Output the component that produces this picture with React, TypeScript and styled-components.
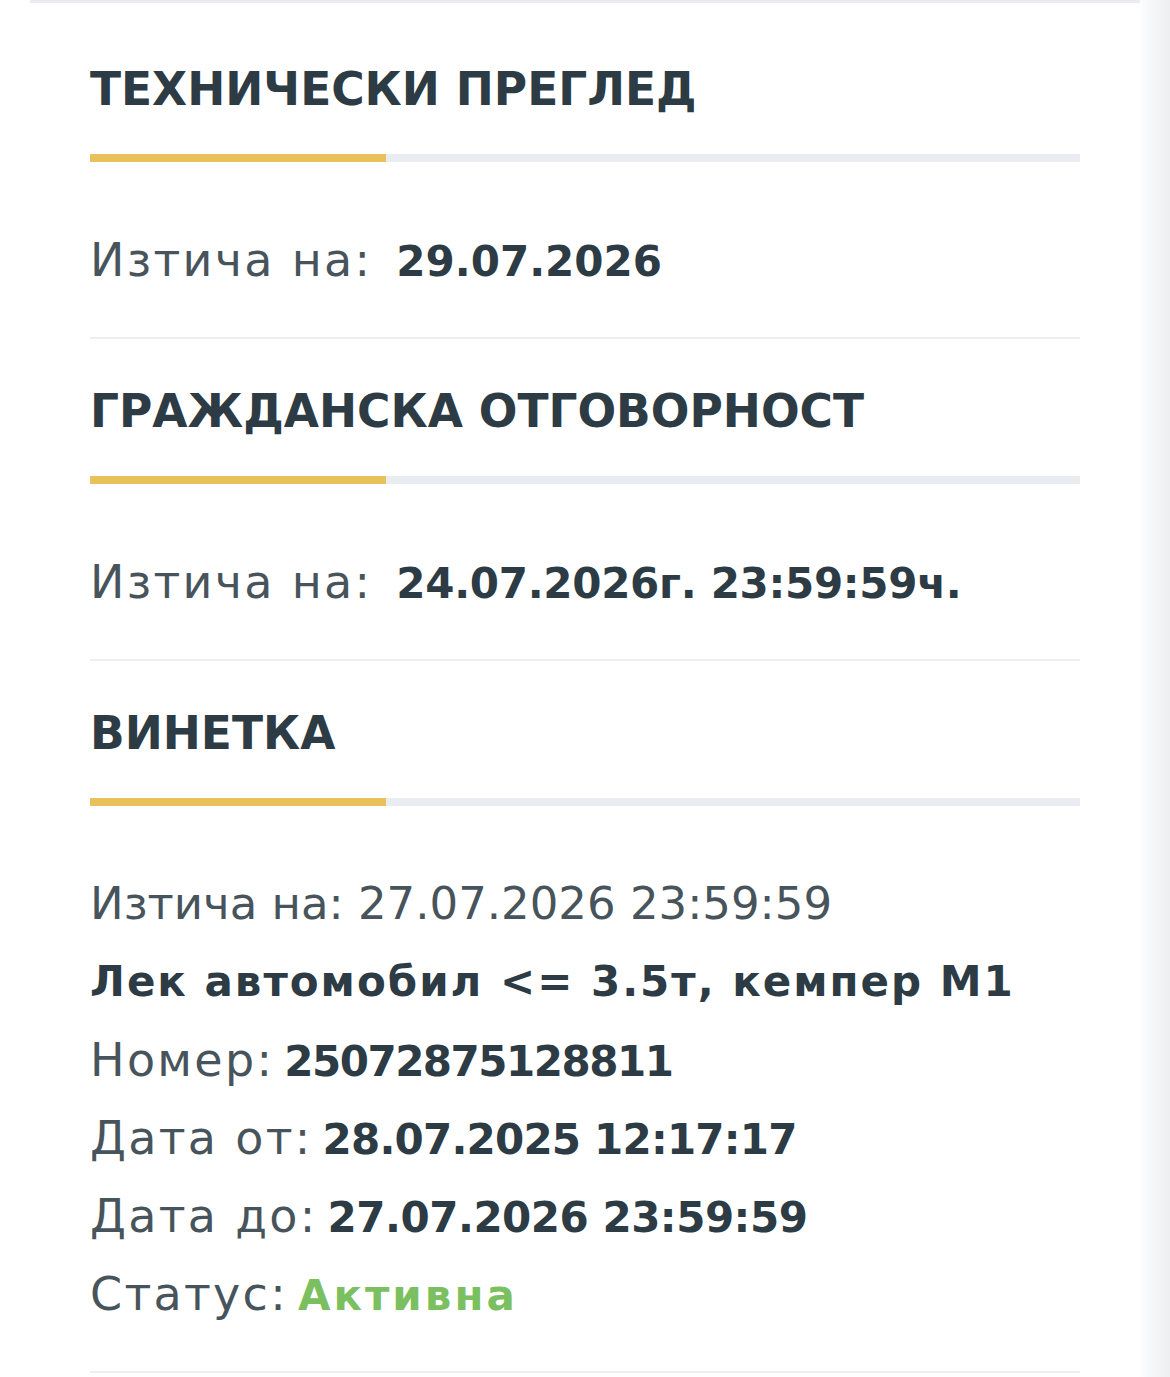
import React from "react";
import styled, { createGlobalStyle } from "styled-components";

const GlobalStyle = createGlobalStyle`
  html, body {
    margin: 0;
    padding: 0;
    background: #ffffff;
  }
  body {
    font-family: "DejaVu Sans", "Open Sans", "Noto Sans", sans-serif;
    color: #2e3d47;
  }
`;

const Page = styled.div`
  min-height: 1377px;
  display: flex;
  background: linear-gradient(
    to right,
    #ffffff 0,
    #ffffff 1138px,
    #f6f7f8 1150px,
    #eeeff1 1170px
  );
`;

const Card = styled.div`
  margin-left: 30px;
  width: 1110px;
  border-top: 3px solid #e9edf1;
  padding: 14px 60px 0;
  box-sizing: border-box;
  background: #ffffff;
`;

const Section = styled.section`
  padding-top: 43px;
  border-bottom: 2px solid #eceef0;
`;

const Heading = styled.h2`
  margin: 0;
  font-size: 45.5px;
  line-height: 60px;
  font-weight: 700;
  color: #2d3b45;
  text-transform: uppercase;
`;

const Progress = styled.div`
  margin-top: 34px;
  height: 8px;
  display: flex;
  background: #e9edf1;
`;

const ProgressFill = styled.div<{ $width: number }>`
  width: ${(p) => p.$width}px;
  background: #e8c15a;
`;

const Rows = styled.div`
  padding: 59px 0 38px;
  display: flex;
  flex-direction: column;
`;

const Row = styled.div<{ $gap?: number }>`
  display: flex;
  align-items: baseline;
  gap: ${(p) => p.$gap ?? 10}px;
  height: 78px;
  line-height: 78px;
  white-space: nowrap;
`;

const Label = styled.span`
  font-size: 46px;
  font-weight: 400;
  letter-spacing: 2.3px;
  color: #48545b;
`;

const Value = styled.span<{ $tone?: "ok"; $spacing?: number }>`
  font-size: 42px;
  font-weight: 700;
  letter-spacing: ${(p) => p.$spacing ?? 0}px;
  color: ${(p) => (p.$tone === "ok" ? "#7bc060" : "#2d3b45")};
`;

const Plain = styled.span`
  font-size: 45px;
  font-weight: 400;
  color: #48545b;
`;

const App: React.FC = () => {
  return (
    <Page>
      <GlobalStyle />
      <Card>
        <Section>
          <Heading>Технически преглед</Heading>
          <Progress>
            <ProgressFill $width={296} />
          </Progress>
          <Rows>
            <Row $gap={24}>
              <Label>Изтича на:</Label>
              <Value>29.07.2026</Value>
            </Row>
          </Rows>
        </Section>

        <Section>
          <Heading>Гражданска отговорност</Heading>
          <Progress>
            <ProgressFill $width={296} />
          </Progress>
          <Rows>
            <Row $gap={24}>
              <Label>Изтича на:</Label>
              <Value $spacing={-0.3}>24.07.2026г. 23:59:59ч.</Value>
            </Row>
          </Rows>
        </Section>

        <Section>
          <Heading>Винетка</Heading>
          <Progress>
            <ProgressFill $width={296} />
          </Progress>
          <Rows>
            <Row>
              <Plain>Изтича на: 27.07.2026 23:59:59</Plain>
            </Row>
            <Row>
              <Value $spacing={2}>Лек автомобил &lt;= 3.5т, кемпер M1</Value>
            </Row>
            <Row>
              <Label>Номер:</Label>
              <Value $spacing={-1.5}>25072875128811</Value>
            </Row>
            <Row>
              <Label>Дата от:</Label>
              <Value $spacing={-0.8}>28.07.2025 12:17:17</Value>
            </Row>
            <Row>
              <Label>Дата до:</Label>
              <Value $spacing={-0.5}>27.07.2026 23:59:59</Value>
            </Row>
            <Row>
              <Label>Статус:</Label>
              <Value $tone="ok" $spacing={3}>
                Активна
              </Value>
            </Row>
          </Rows>
        </Section>
      </Card>
    </Page>
  );
};

export default App;
